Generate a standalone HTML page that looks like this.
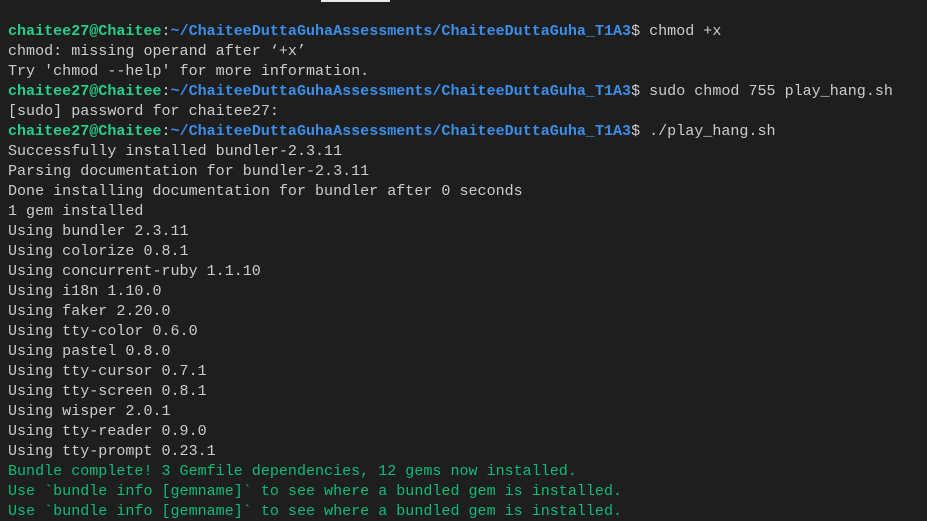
<!DOCTYPE html>
<html><head><meta charset="utf-8">
<style>
html,body{margin:0;padding:0;background:#1e1e1e;width:927px;height:502px;overflow:hidden}
.bar{position:absolute;left:321px;top:0;width:69px;height:2px;background:#e8e8e8}
pre{position:absolute;left:8px;top:21px;margin:0;font-family:"Liberation Mono",monospace;font-size:15.05px;line-height:20px;color:#cccccc;white-space:pre}
.g{color:#23d18b;font-weight:bold}
.b{color:#3b8eea;font-weight:bold}
.gr{color:#0dbc79}
</style></head><body>
<div class="bar"></div>
<pre><span class="g">chaitee27@Chaitee</span>:<span class="b">~/ChaiteeDuttaGuhaAssessments/ChaiteeDuttaGuha_T1A3</span>$ chmod +x
chmod: missing operand after ‘+x’
Try 'chmod --help' for more information.
<span class="g">chaitee27@Chaitee</span>:<span class="b">~/ChaiteeDuttaGuhaAssessments/ChaiteeDuttaGuha_T1A3</span>$ sudo chmod 755 play_hang.sh
[sudo] password for chaitee27:
<span class="g">chaitee27@Chaitee</span>:<span class="b">~/ChaiteeDuttaGuhaAssessments/ChaiteeDuttaGuha_T1A3</span>$ ./play_hang.sh
Successfully installed bundler-2.3.11
Parsing documentation for bundler-2.3.11
Done installing documentation for bundler after 0 seconds
1 gem installed
Using bundler 2.3.11
Using colorize 0.8.1
Using concurrent-ruby 1.1.10
Using i18n 1.10.0
Using faker 2.20.0
Using tty-color 0.6.0
Using pastel 0.8.0
Using tty-cursor 0.7.1
Using tty-screen 0.8.1
Using wisper 2.0.1
Using tty-reader 0.9.0
Using tty-prompt 0.23.1
<span class="gr">Bundle complete! 3 Gemfile dependencies, 12 gems now installed.</span>
<span class="gr">Use `bundle info [gemname]` to see where a bundled gem is installed.</span>
<span class="gr">Use `bundle info [gemname]` to see where a bundled gem is installed.</span></pre>
</body></html>
